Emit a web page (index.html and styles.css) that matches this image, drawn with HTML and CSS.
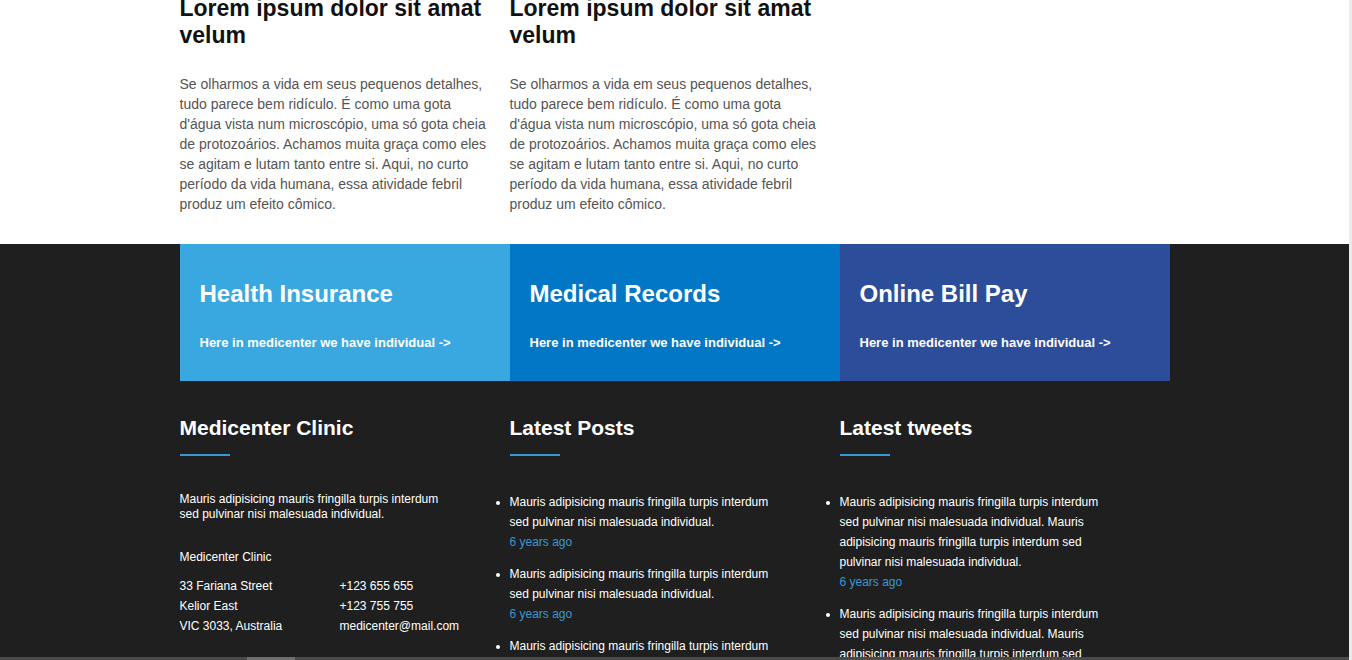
FILE: index.html
```html
<!DOCTYPE html>
<html lang="pt">
<head>
<meta charset="utf-8">
<title>Medicenter</title>
<link rel="stylesheet" href="styles.css">
</head>
<body>
<div class="page">
  <section class="articles">
    <div class="container cols">
      <article class="post">
        <h2 class="post-title">Lorem ipsum dolor sit amat velum</h2>
        <p class="post-text">Se olharmos a vida em seus pequenos detalhes, tudo parece bem ridículo. É como uma gota d'água vista num microscópio, uma só gota cheia de protozoários. Achamos muita graça como eles se agitam e lutam tanto entre si. Aqui, no curto período da vida humana, essa atividade febril produz um efeito cômico.</p>
      </article>
      <article class="post">
        <h2 class="post-title">Lorem ipsum dolor sit amat velum</h2>
        <p class="post-text">Se olharmos a vida em seus pequenos detalhes, tudo parece bem ridículo. É como uma gota d'água vista num microscópio, uma só gota cheia de protozoários. Achamos muita graça como eles se agitam e lutam tanto entre si. Aqui, no curto período da vida humana, essa atividade febril produz um efeito cômico.</p>
      </article>
      <div class="post"></div>
    </div>
  </section>

  <section class="dark">
    <div class="container">
      <div class="services">
        <a class="service service-light" href="#">
          <h3 class="service-title">Health Insurance</h3>
          <span class="service-link">Here in medicenter we have individual -&gt;</span>
        </a>
        <a class="service service-mid" href="#">
          <h3 class="service-title">Medical Records</h3>
          <span class="service-link">Here in medicenter we have individual -&gt;</span>
        </a>
        <a class="service service-dark" href="#">
          <h3 class="service-title">Online Bill Pay</h3>
          <span class="service-link">Here in medicenter we have individual -&gt;</span>
        </a>
      </div>

      <div class="footer-cols">
        <div class="fcol">
          <h4 class="fcol-title">Medicenter Clinic</h4>
          <div class="rule"></div>
          <p class="about">Mauris adipisicing mauris fringilla turpis interdum sed pulvinar nisi malesuada individual.</p>
          <p class="clinic-name">Medicenter Clinic</p>
          <div class="address">
            <span>33 Fariana Street</span><span>+123 655 655</span>
            <span>Kelior East</span><span>+123 755 755</span>
            <span>VIC 3033, Australia</span><span>medicenter@mail.com</span>
          </div>
        </div>

        <div class="fcol">
          <h4 class="fcol-title">Latest Posts</h4>
          <div class="rule"></div>
          <ul class="feed">
            <li>Mauris adipisicing mauris fringilla turpis interdum sed pulvinar nisi malesuada individual.<span class="ago">6 years ago</span></li>
            <li>Mauris adipisicing mauris fringilla turpis interdum sed pulvinar nisi malesuada individual.<span class="ago">6 years ago</span></li>
            <li>Mauris adipisicing mauris fringilla turpis interdum sed pulvinar nisi malesuada individual.<span class="ago">6 years ago</span></li>
          </ul>
        </div>

        <div class="fcol">
          <h4 class="fcol-title">Latest tweets</h4>
          <div class="rule"></div>
          <ul class="feed">
            <li>Mauris adipisicing mauris fringilla turpis interdum sed pulvinar nisi malesuada individual. Mauris adipisicing mauris fringilla turpis interdum sed pulvinar nisi malesuada individual.<span class="ago">6 years ago</span></li>
            <li>Mauris adipisicing mauris fringilla turpis interdum sed pulvinar nisi malesuada individual. Mauris adipisicing mauris fringilla turpis interdum sed pulvinar nisi malesuada individual.<span class="ago">6 years ago</span></li>
          </ul>
        </div>
      </div>
    </div>
  </section>
</div>
<div class="vscroll"></div>
<div class="hscroll"><span class="hthumb"></span></div>
</body>
</html>
```

FILE: styles.css
```css
html, body {
  margin: 0;
  padding: 0;
  overflow: hidden;
  background: #ffffff;
}

body {
  font-family: "Liberation Sans", Arial, sans-serif;
  color: #222;
}

.page {
  width: 1349px;
  height: 660px;
  overflow: hidden;
  display: flex;
  flex-direction: column;
}

.container {
  width: 990px;
  margin: 0 auto;
}

/* Articles */
.articles {
  margin-top: -5px;
  padding-bottom: 30px;
  background: #fff;
}

.cols {
  display: grid;
  grid-template-columns: 330px 330px 330px;
}

.post {
  padding-right: 20px;
}

.post-title {
  margin: 0;
  font-size: 23px;
  line-height: 27px;
  font-weight: 700;
  color: #111;
}

.post-text {
  margin: 25px 0 0;
  font-size: 14px;
  line-height: 20px;
  color: #555;
}

/* Dark section */
.dark {
  flex: 1;
  background: #1f1f1f;
}

.services {
  display: grid;
  grid-template-columns: 330px 330px 330px;
}

.service {
  display: flex;
  flex-direction: column;
  padding: 36px 20px 30px;
  color: #fff;
  text-decoration: none;
}

.service-light { background: #3aa8e0; }
.service-mid { background: #0277c6; }
.service-dark { background: #2c4d9a; }

.service-title {
  margin: 0;
  font-size: 24px;
  line-height: 28px;
  font-weight: 700;
}

.service-link {
  margin-top: 27px;
  font-size: 13px;
  line-height: 16px;
  font-weight: 700;
}

.footer-cols {
  display: grid;
  grid-template-columns: 330px 330px 330px;
  padding-top: 34px;
}

.fcol {
  color: #fff;
}

.fcol-title {
  margin: 0;
  font-size: 21px;
  line-height: 25px;
  font-weight: 700;
  color: #fff;
}

.rule {
  width: 50px;
  height: 2px;
  margin-top: 14px;
  background: #3b97d3;
}

.about {
  width: 270px;
  margin: 36px 0 0;
  font-size: 12px;
  line-height: 15px;
}

.clinic-name {
  margin: 25px 0 0;
  font-size: 12px;
  line-height: 20px;
}

.address {
  display: grid;
  grid-template-columns: 160px auto;
  margin-top: 9px;
  font-size: 12px;
  line-height: 20px;
}

.feed {
  width: 270px;
  margin: 36px 0 0;
  padding: 0;
  list-style: disc outside;
  font-size: 12px;
  line-height: 20px;
}

.feed li {
  margin-bottom: 12px;
}

.ago {
  display: block;
  color: #3b97d3;
}

/* scrollbar strips */
.vscroll {
  position: fixed;
  top: 0;
  right: 0;
  width: 3px;
  height: 660px;
  background: #ebebeb;
}

.hscroll {
  position: fixed;
  left: 0;
  bottom: 0;
  width: 1349px;
  height: 3px;
  background: #4a4a4a;
}

.hthumb {
  position: absolute;
  left: 247px;
  top: 0;
  width: 48px;
  height: 3px;
  background: #6e6e6e;
}
```
